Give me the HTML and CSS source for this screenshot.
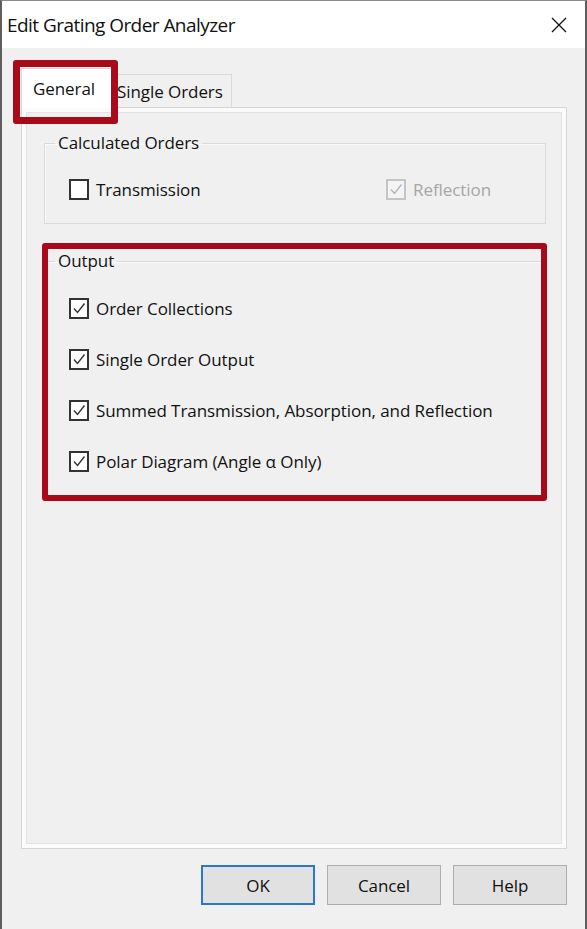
FILE: index.html
```html
<!DOCTYPE html>
<html>
<head>
<meta charset="utf-8">
<link rel="stylesheet" href="styles.css">
</head>
<body>
<div class="window">
  <div class="titlebar">
    <span class="title">Edit Grating Order Analyzer</span>
    <svg class="close" width="16" height="16" viewBox="0 0 16 16"><path d="M1 1 L15 15 M15 1 L1 15" stroke="#111" stroke-width="1.3" fill="none"/></svg>
  </div>
  <div class="content">
    <div class="tabs">
      <div class="tab active">General</div>
      <div class="tab">Single Orders</div>
    </div>
    <div class="panel">
      <fieldset class="group calc">
        <legend>Calculated Orders</legend>
        <div class="calc-row">
          <label class="check"><span class="box"></span><span>Transmission</span></label>
          <label class="check disabled"><span class="box"><svg viewBox="0 0 16 16"><path d="M3 8.5 L6.5 12.5 L13.5 3.5" fill="none" stroke-width="1.4"/></svg></span><span>Reflection</span></label>
        </div>
      </fieldset>
      <fieldset class="group output">
        <legend>Output</legend>
        <div class="rows">
          <label class="check"><span class="box"><svg viewBox="0 0 16 16"><path d="M3 8.5 L6.5 12.5 L13.5 3.5" fill="none" stroke-width="1.4"/></svg></span><span>Order Collections</span></label>
          <label class="check"><span class="box"><svg viewBox="0 0 16 16"><path d="M3 8.5 L6.5 12.5 L13.5 3.5" fill="none" stroke-width="1.4"/></svg></span><span>Single Order Output</span></label>
          <label class="check"><span class="box"><svg viewBox="0 0 16 16"><path d="M3 8.5 L6.5 12.5 L13.5 3.5" fill="none" stroke-width="1.4"/></svg></span><span>Summed Transmission, Absorption, and Reflection</span></label>
          <label class="check"><span class="box"><svg viewBox="0 0 16 16"><path d="M3 8.5 L6.5 12.5 L13.5 3.5" fill="none" stroke-width="1.4"/></svg></span><span>Polar Diagram (Angle α Only)</span></label>
        </div>
      </fieldset>
    </div>
    <div class="buttons">
      <button class="btn default">OK</button>
      <button class="btn">Cancel</button>
      <button class="btn">Help</button>
    </div>
  </div>
  <div class="highlight hl-tab"></div>
  <div class="highlight hl-output"></div>
</div>
</body>
</html>
```
FILE: styles.css
```css
* { box-sizing: border-box; }
html, body { margin: 0; padding: 0; }
body {
  font-family: "Open Sans", "Noto Sans", sans-serif;
  color: #111;
  background: #f0f0f0;
}
.window {
  position: relative;
  width: 587px;
  height: 929px;
  border-top: 1px solid #8a8a8a;
  border-left: 2px solid #5e5e5e;
  border-right: 2px solid #5e5e5e;
  background: #f0f0f0;
  overflow: hidden;
}
.titlebar {
  height: 47px;
  background: #fff;
  display: flex;
  align-items: center;
  justify-content: space-between;
  padding: 0 18px 0 5px;
}
.title {
  font-size: 19px;
  letter-spacing: -0.55px;
  color: #111;
}
.close { display: block; }
.content {
  padding: 0 18px 0 19px;
}
.tabs {
  height: 59px;
  display: flex;
  align-items: flex-end;
  position: relative;
  z-index: 1;
}
.tab {
  font-size: 17px;
  letter-spacing: -0.07px;
  border: 1px solid #d9d9d9;
  border-bottom: none;
  background: #f0f0f0;
}
.tab.active {
  width: 92px;
  height: 40px;
  margin-bottom: -1px;
  background: #fff;
  padding: 8px 0 0 11px;
  border-right: none;
}
.tab:not(.active) {
  width: 119px;
  height: 33px;
  padding: 5px 0 0 3px;
}
.panel {
  height: 742px;
  border: 1px solid #d6d6d6;
  box-shadow: inset 0 0 0 4px #fbfbfb, inset 0 0 0 5px #e3e3e3;
  padding: 23px 20px 0 22px;
}
.group {
  margin: 0;
  padding: 0;
  border: 1px solid #dadada;
  box-shadow: inset 1px 1px 0 #fafafa;
  min-width: 0;
}
.group legend {
  font-size: 17px;
  letter-spacing: -0.07px;
  line-height: 24px;
  margin-left: 10px;
  padding: 0 3px;
}
.calc-row {
  display: grid;
  grid-template-columns: 317px auto;
  padding: 23px 0 23px 24px;
}
.output { margin-top: 25px; height: 248px; }
.rows {
  display: flex;
  flex-direction: column;
  gap: 29px;
  padding: 24px 0 0 24px;
}
.check {
  display: flex;
  align-items: center;
  height: 22px;
  font-size: 17px;
  letter-spacing: -0.07px;
  gap: 7px;
}
.box {
  width: 20px;
  height: 21px;
  border: 2px solid #333;
  background: #fff;
  display: flex;
  align-items: center;
  justify-content: center;
}
.box svg { width: 16px; height: 16px; stroke: #333; }
.check.disabled { color: #a6a6a6; }
.check.disabled .box { border-color: #c4c4c4; background: #f4f4f4; }
.check.disabled .box svg { stroke: #b5b5b5; }
.buttons {
  display: flex;
  justify-content: flex-end;
  gap: 12px;
  margin-top: 16px;
}
.btn {
  width: 114px;
  height: 40px;
  font-family: "Open Sans", "Noto Sans", sans-serif;
  font-size: 17px;
  letter-spacing: -0.07px;
  color: #111;
  background: #e1e1e1;
  border: 1px solid #adadad;
  padding: 0;
}
.btn.default { border: 2px solid #2a78c8; }
.highlight {
  position: absolute;
  border: 7px solid #a80a1a;
  border-radius: 3px;
  z-index: 5;
}
.hl-tab { left: 11px; top: 59px; width: 105px; height: 64px; }
.hl-output { left: 40px; top: 242px; width: 505px; height: 258px; border-width: 6px; }
```
